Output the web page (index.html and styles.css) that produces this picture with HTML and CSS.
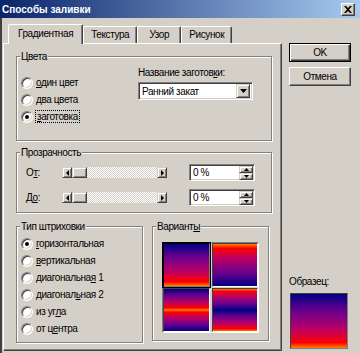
FILE: index.html
```html
<!DOCTYPE html>
<html lang="ru">
<head>
    <meta charset="UTF-8">
    <title>Способы заливки</title>
    <link rel="stylesheet" href="styles.css">
</head>
<body>
    <div class="window">
        <div class="titlebar">
            <span class="title">Способы заливки</span>
            <span class="close-btn">
                <svg width="8" height="7" viewBox="0 0 8 7"><path d="M0 0h2l2 2 2-2h2L5 3.5 8 7H6L4 5 2 7H0l3-3.5z" fill="#000"/></svg>
            </span>
        </div>
        <div class="client">
            <div class="tab-area">
                <div class="tabs">
                    <div class="tab active">Градиентная</div>
                    <div class="tab">Текстура</div>
                    <div class="tab">Узор</div>
                    <div class="tab">Рисунок</div>
                </div>
                <div class="panel">
                    <fieldset class="group colors">
                        <legend>Цвета</legend>
                        <div class="colors-body">
                            <div class="radio-list">
                                <label class="radio-row"><span class="radio"></span><span><u>о</u>дин цвет</span></label>
                                <label class="radio-row"><span class="radio"></span><span><u>д</u>ва цвета</span></label>
                                <label class="radio-row"><span class="radio checked"></span><span class="focus"><u>з</u>аготовка</span></label>
                            </div>
                            <div class="preset">
                                <div class="preset-label">Название заготов<u>к</u>и:</div>
                                <div class="combo">
                                    <span class="combo-text">Ранний закат</span>
                                    <span class="combo-btn">
                                        <svg width="7" height="4" viewBox="0 0 7 4"><path d="M0 0h7L3.5 4z" fill="#000"/></svg>
                                    </span>
                                </div>
                            </div>
                        </div>
                    </fieldset>

                    <fieldset class="group transparency">
                        <legend>Прозрачность</legend>
                        <div class="trans-body">
                            <div class="trans-row">
                                <span class="trans-label">О<u>т</u>:</span>
                                <div class="hscroll">
                                    <span class="sb-btn"><svg width="3" height="6" viewBox="0 0 3 6"><path d="M3 0v6L0 3z" fill="#000"/></svg></span>
                                    <span class="sb-thumb"></span>
                                    <span class="sb-track"></span>
                                    <span class="sb-btn"><svg width="3" height="6" viewBox="0 0 3 6"><path d="M0 0v6l3-3z" fill="#000"/></svg></span>
                                </div>
                                <div class="spin">
                                    <span class="spin-text">0 %</span>
                                    <span class="spin-btns">
                                        <span class="spin-btn"><svg width="5" height="3" viewBox="0 0 5 3"><path d="M0 3h5L2.5 0z" fill="#000"/></svg></span>
                                        <span class="spin-btn"><svg width="5" height="3" viewBox="0 0 5 3"><path d="M0 0h5L2.5 3z" fill="#000"/></svg></span>
                                    </span>
                                </div>
                            </div>
                            <div class="trans-row">
                                <span class="trans-label">Д<u>о</u>:</span>
                                <div class="hscroll">
                                    <span class="sb-btn"><svg width="3" height="6" viewBox="0 0 3 6"><path d="M3 0v6L0 3z" fill="#000"/></svg></span>
                                    <span class="sb-thumb"></span>
                                    <span class="sb-track"></span>
                                    <span class="sb-btn"><svg width="3" height="6" viewBox="0 0 3 6"><path d="M0 0v6l3-3z" fill="#000"/></svg></span>
                                </div>
                                <div class="spin">
                                    <span class="spin-text">0 %</span>
                                    <span class="spin-btns">
                                        <span class="spin-btn"><svg width="5" height="3" viewBox="0 0 5 3"><path d="M0 3h5L2.5 0z" fill="#000"/></svg></span>
                                        <span class="spin-btn"><svg width="5" height="3" viewBox="0 0 5 3"><path d="M0 0h5L2.5 3z" fill="#000"/></svg></span>
                                    </span>
                                </div>
                            </div>
                        </div>
                    </fieldset>

                    <div class="bottom-groups">
                        <fieldset class="group shading">
                            <legend>Тип штриховки</legend>
                            <div class="radio-list shading-list">
                                <label class="radio-row"><span class="radio checked"></span><span><u>г</u>оризонтальная</span></label>
                                <label class="radio-row"><span class="radio"></span><span><u>в</u>ертикальная</span></label>
                                <label class="radio-row"><span class="radio"></span><span>диагональна<u>я</u> 1</span></label>
                                <label class="radio-row"><span class="radio"></span><span>диагонал<u>ь</u>ная 2</span></label>
                                <label class="radio-row"><span class="radio"></span><span>из уг<u>л</u>а</span></label>
                                <label class="radio-row"><span class="radio"></span><span>от ц<u>е</u>нтра</span></label>
                            </div>
                        </fieldset>
                        <fieldset class="group variants">
                            <legend>Вариант<u>ы</u></legend>
                            <div class="variant-grid">
                                <div class="variant v-down selected"></div>
                                <div class="variant v-up"></div>
                                <div class="variant v-center"></div>
                                <div class="variant v-edges"></div>
                            </div>
                        </fieldset>
                    </div>
                </div>
            </div>
            <div class="side">
                <button class="btn default">OK</button>
                <button class="btn">Отмена</button>
                <div class="sample">
                    <div class="sample-label">Образец:</div>
                    <div class="sample-box"></div>
                </div>
            </div>
        </div>
    </div>
</body>
</html>
```

FILE: styles.css
```css
* {
    box-sizing: border-box;
}

body {
    margin: 0;
    background: #d4d0c8;
    font-family: "Liberation Sans", Arial, sans-serif;
    font-size: 10px;
    letter-spacing: -0.4px;
    color: #000;
}

u {
    text-decoration: underline;
    text-underline-offset: 1px;
}

.window {
    width: 360px;
    height: 353px;
    overflow: hidden;
    background: #d4d0c8;
}

/* title bar */
.titlebar {
    height: 18px;
    display: flex;
    align-items: center;
    justify-content: space-between;
    padding: 0 5px 0 2px;
    background: linear-gradient(to right, #0a246a, #a6caf0);
}

.title {
    color: #fff;
    font-weight: bold;
    letter-spacing: 0;
}

.close-btn {
    width: 14px;
    height: 13px;
    display: flex;
    align-items: center;
    justify-content: center;
    background: #d4d0c8;
    border: 1px solid;
    border-color: #fff #404040 #404040 #fff;
    box-shadow: inset -1px -1px #808080;
}

/* main area */
.client {
    display: flex;
    height: 335px;
    border-left: 2px solid #404040;
    padding-top: 6px;
}

.tab-area {
    width: 279px;
    margin-left: 1px;
    display: flex;
    flex-direction: column;
}

.tabs {
    display: flex;
    align-items: flex-end;
    height: 19px;
    padding-left: 5px;
    position: relative;
    z-index: 1;
}

.tab {
    min-width: 44px;
    height: 17px;
    line-height: 15px;
    padding: 0 7px;
    text-align: center;
    border: 1px solid;
    border-bottom: none;
    border-color: #fff #404040 #404040 #fff;
    border-radius: 2px 2px 0 0;
    box-shadow: inset -1px 0 #808080;
    background: #d4d0c8;
}

.tab.active {
    height: 20px;
    line-height: 17px;
    padding: 0 9px;
    margin-bottom: -1px;
}

.panel {
    flex: 1;
    margin-bottom: 2px;
    border: 1px solid;
    border-color: #fff #404040 #404040 #fff;
    box-shadow: inset -1px -1px #808080;
    padding: 6px 9px 0 12px;
}

/* group boxes */
.group {
    margin: 0;
    padding: 0;
    border: 1px solid #808080;
    box-shadow: inset 1px 1px #fff, 1px 1px #fff;
}

.group legend {
    margin-left: 3px;
    padding: 0 1px;
    line-height: 13px;
    background: #d4d0c8;
}

.colors-body {
    display: flex;
    height: 77px;
}

.radio-list {
    display: flex;
    flex-direction: column;
    padding: 11px 0 0 4px;
    width: 121px;
}

.radio-row {
    display: flex;
    align-items: center;
    height: 17px;
    gap: 3px;
}

.radio {
    position: relative;
    flex: none;
    width: 12px;
    height: 12px;
    border-radius: 50%;
    background: #fff;
    border: 1px solid;
    border-color: #808080 #fff #fff #808080;
    box-shadow: inset 1px 1px #404040, inset -1px -1px #d4d0c8;
}

.radio.checked::after {
    content: "";
    position: absolute;
    left: 3px;
    top: 3px;
    width: 4px;
    height: 4px;
    border-radius: 50%;
    background: #000;
}

.focus {
    outline: 1px dotted #000;
    padding: 0 1px;
}

.preset {
    padding-top: 3px;
}

.preset-label {
    line-height: 13px;
    margin-bottom: 3px;
}

.combo {
    width: 115px;
    height: 18px;
    display: flex;
    align-items: center;
    background: #fff;
    border: 1px solid;
    border-color: #808080 #fff #fff #808080;
    box-shadow: inset 1px 1px #404040, inset -1px -1px #d4d0c8;
    padding: 0 2px 0 3px;
}

.combo-text {
    flex: 1;
}

.combo-btn,
.sb-btn,
.spin-btn {
    display: flex;
    align-items: center;
    justify-content: center;
    background: #d4d0c8;
    border: 1px solid;
    border-color: #d4d0c8 #404040 #404040 #d4d0c8;
    box-shadow: inset 1px 1px #fff, inset -1px -1px #808080;
}

.combo-btn {
    width: 14px;
    height: 14px;
}

.transparency {
    margin-top: 5px;
}

.trans-body {
    padding: 1px 0 2px 9px;
}

.trans-row {
    display: flex;
    align-items: center;
    height: 25px;
}

.trans-label {
    width: 36px;
}

.hscroll {
    display: flex;
    width: 105px;
    height: 11px;
}

.sb-btn {
    width: 10px;
    height: 11px;
}

.sb-thumb {
    width: 15px;
    height: 11px;
    background: #d4d0c8;
    border: 1px solid;
    border-color: #d4d0c8 #404040 #404040 #d4d0c8;
    box-shadow: inset 1px 1px #fff, inset -1px -1px #808080;
}

.sb-track {
    flex: 1;
    background: repeating-conic-gradient(#fff 0 25%, #d4d0c8 0 50%) 0 0 / 2px 2px;
}

.spin {
    margin-left: 22px;
    width: 66px;
    height: 17px;
    display: flex;
    align-items: center;
    background: #fff;
    border: 1px solid;
    border-color: #808080 #fff #fff #808080;
    box-shadow: inset 1px 1px #404040, inset -1px -1px #d4d0c8;
    padding: 1px 1px 1px 3px;
}

.spin-text {
    flex: 1;
}

.spin-btns {
    display: flex;
    flex-direction: column;
    width: 14px;
    height: 14px;
}

.spin-btn {
    flex: 1;
}

.bottom-groups {
    display: flex;
    gap: 9px;
    margin-top: 7px;
}

.shading {
    width: 127px;
    height: 123px;
}

.shading-list {
    padding-top: 2px;
    width: auto;
}

.variants {
    width: 117px;
    height: 121px;
}

.variant-grid {
    display: grid;
    grid-template-columns: 1fr 1fr;
    grid-template-rows: 1fr 1fr;
    gap: 1px 2px;
    width: 97px;
    height: 91px;
    margin: 9px 0 0 9px;
    border: 1px solid;
    border-color: #808080 #fff #fff #808080;
}

.variant {
    border: 1px solid;
    border-color: #404040 #fff #fff #404040;
}

.variant.selected {
    border-color: #000 #808080 #808080 #000;
    box-shadow: 0 0 0 1px #000;
}

.v-down,
.sample-box {
    background: linear-gradient(to bottom, #000082 0%, #66008f 30%, #ba0066 65%, #ff0000 90%, #ff8200 100%);
}

.v-up {
    background: linear-gradient(to top, #000082 0%, #66008f 30%, #ba0066 65%, #ff0000 90%, #ff8200 100%);
}

.v-center {
    background: linear-gradient(to bottom, #000082 0%, #66008f 15%, #ba0066 32%, #ff0000 45%, #ff8200 50%, #ff0000 55%, #ba0066 68%, #66008f 85%, #000082 100%);
}

.v-edges {
    background: linear-gradient(to bottom, #ff8200 0%, #ff0000 5%, #ba0066 18%, #66008f 35%, #000082 50%, #66008f 65%, #ba0066 82%, #ff0000 95%, #ff8200 100%);
}

/* right column */
.side {
    display: flex;
    flex-direction: column;
    margin-left: 7px;
    width: 62px;
    padding: 19px 0 4px 0;
}

.btn {
    height: 19px;
    margin-bottom: 5px;
    font-family: inherit;
    font-size: 10px;
    letter-spacing: inherit;
    color: #000;
    background: #d4d0c8;
    border: 1px solid;
    border-color: #fff #404040 #404040 #fff;
    box-shadow: inset -1px -1px #808080;
    padding: 0;
}

.btn.default {
    border-color: #000;
    box-shadow: inset 1px 1px #fff, inset -1px -1px #404040, inset -2px -2px #808080;
}

.sample {
    margin-top: auto;
}

.sample-label {
    line-height: 13px;
    margin-bottom: 5px;
}

.sample-box {
    width: 58px;
    height: 56px;
    margin-left: 1px;
    border: 1px solid;
    border-color: #404040 #808080 #808080 #404040;
}
```
